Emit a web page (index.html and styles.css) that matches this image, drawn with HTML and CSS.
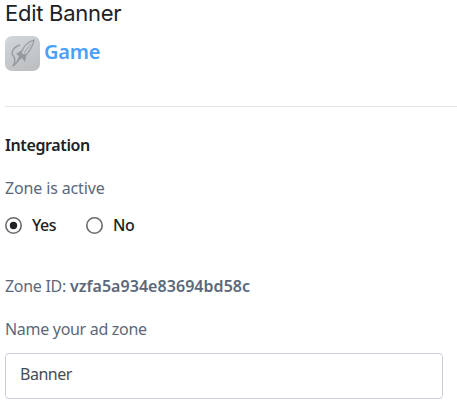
FILE: index.html
```html
<!DOCTYPE html>
<html lang="en">
<head>
<meta charset="utf-8">
<title>Edit Banner</title>
<link rel="stylesheet" href="styles.css">
</head>
<body>
<main class="page">
  <header class="header">
    <h1 class="title"><span>Edit Banner</span></h1>
    <div class="app">
      <svg class="app-icon" viewBox="0 0 35 35" aria-hidden="true">
        <defs><linearGradient id="tile" x1="0" y1="0" x2="0.5" y2="1"><stop offset="0" stop-color="#d3d7da"/><stop offset="1" stop-color="#bdc1c4"/></linearGradient></defs>
        <rect width="35" height="35" rx="7" fill="url(#tile)"/>
        <g fill="none" stroke="#989b9e" stroke-linejoin="round">
          <path d="M17 15C19 10 23 6 29 4C28 10 25 15 20 20" stroke-width="1.3"/>
          <path d="M19 17L26 8" stroke-width="0.8"/>
          <path d="M15 9C8 11 5 17 9 21C10 23 10 27 8 30C11 28 14 24 16 20" stroke-width="1.4"/>
        </g>
        <path d="M11 18L17 14L17 18L21 18L21 22L20 26L17 22L11 27L14 20Z" fill="#989b9e"/>
      </svg>
      <a class="app-name"><span>Game</span></a>
    </div>
  </header>
  <section>
    <h2 class="heading"><span>Integration</span></h2>
    <div class="label active-label"><span>Zone is active</span></div>
    <div class="radios">
      <label class="choice choice-yes"><svg class="radio" viewBox="0 0 17 17"><circle class="ring" cx="8.5" cy="8.5" r="7.7"/><circle class="dot" cx="8.5" cy="8.5" r="3.7"/></svg><span>Yes</span></label>
      <label class="choice"><svg class="radio" viewBox="0 0 17 17"><circle class="ring" cx="8.5" cy="8.5" r="7.7"/></svg><span>No</span></label>
    </div>
    <div class="label zone-id"><span class="zone-key">Zone ID:</span><b class="zone-value">vzfa5a934e83694bd58c</b></div>
    <div class="label name-label"><span>Name your ad zone</span></div>
    <div class="field"><span>Banner</span></div>
  </section>
</main>
</body>
</html>
```
FILE: styles.css
```css
* { box-sizing: border-box; }
body {
  margin: 0;
  background: #fff;
  color: #202124;
  font: 16px/24px "Noto Sans", sans-serif;
  white-space: nowrap;
  overflow: hidden;
}
.page { padding-left: 5px; }
.header { height: 107px; border-bottom: 1px solid #e3e5e8; }
.title {
  margin: 0;
  height: 36px;
  font: 400 22px/26px "Inter", sans-serif;
  letter-spacing: -0.27px;
}
.app { display: flex; gap: 4px; }
.app-icon { width: 35px; height: 35px; }
.app-name {
  color: #4a9ff8;
  font-size: 20px;
  font-weight: 600;
  line-height: 32px;
  letter-spacing: -0.25px;
}
.heading {
  margin: 26px 0 19px;
  font-size: 16px;
  font-weight: 600;
  line-height: 24px;
  letter-spacing: -0.38px;
}
.label { height: 24px; color: #5c687a; letter-spacing: -0.3px; }
.active-label { letter-spacing: -0.14px; }
.radios { display: flex; margin-top: 13px; height: 24px; }
.choice { display: flex; align-items: center; gap: 10px; font-weight: 500; letter-spacing: -0.5px; }
.choice-yes { width: 81px; }
.radio { width: 17px; height: 17px; }
.ring { fill: #fff; stroke: #6a6a6a; stroke-width: 1.6; }
.dot { fill: #202124; }
.zone-id { display: flex; gap: 4px; margin-top: 37px; }
.zone-value { font-weight: 600; letter-spacing: 0.05px; }
.name-label { margin-top: 19px; }
.field {
  width: 438px;
  height: 46px;
  margin-top: 12px;
  padding: 8px 14px;
  border: 1px solid #cbced8;
  border-radius: 4px;
  color: #464b53;
  letter-spacing: -0.5px;
}
```
